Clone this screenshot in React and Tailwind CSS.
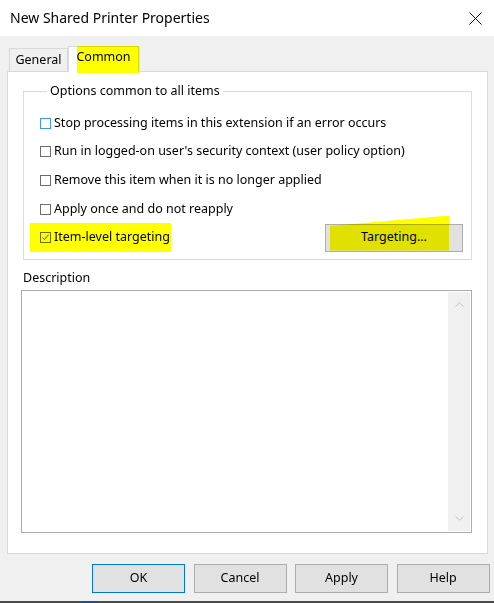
import { useState } from 'react';

const options = [
  { label: 'Stop processing items in this extension if an error occurs', checked: false, focus: true },
  { label: "Run in logged-on user's security context (user policy option)", checked: false },
  { label: 'Remove this item when it is no longer applied', checked: false },
  { label: 'Apply once and do not reapply', checked: false },
];

function Check({ checked, focus }) {
  return (
    <span
      className={`w-[11px] h-[11px] border bg-white flex items-center justify-center shrink-0 ${
        focus ? 'border-[#3c9be8]' : 'border-[#6d6d6d]'
      }`}
    >
      {checked && (
        <svg width="9" height="9" viewBox="0 0 9 9">
          <path d="M1.5 4.5 L3.5 6.5 L7.5 1.8" fill="none" stroke="#555" strokeWidth="1" />
        </svg>
      )}
    </span>
  );
}

function Button({ children, primary }) {
  return (
    <button
      className={`w-[93px] h-[29px] bg-[#e1e1e1] border text-[12.5px] text-black ${
        primary ? 'border-[#0078d7]' : 'border-[#adadad]'
      }`}
    >
      {children}
    </button>
  );
}

export default function App() {
  const [itemLevel] = useState(true);

  return (
    <div className="w-[494px] h-[603px] bg-[#f0f0f0] flex flex-col font-['Noto_Sans',sans-serif] text-[12.5px] text-black overflow-hidden">
      {/* title bar */}
      <div className="h-[36px] bg-white flex items-center justify-between pl-[10px] pr-[12px] shrink-0">
        <span className="text-[14px] leading-none">New Shared Printer Properties</span>
        <svg width="13" height="13" viewBox="0 0 13 13">
          <path d="M0.5 0.5 L12.5 12.5 M12.5 0.5 L0.5 12.5" stroke="#111" strokeWidth="1" />
        </svg>
      </div>

      {/* tabs */}
      <div className="flex items-end pl-[9px] pt-[8px] h-[35px] shrink-0">
        <div className="w-[59px] h-[23px] border border-b-0 border-[#d9d9d9] flex items-center justify-center">
          General
        </div>
        <div className="relative w-[71px] h-[26px] border border-b-0 border-[#d9d9d9] bg-white flex items-center justify-center -mb-px z-10">
          <span className="pb-[4px]">Common</span>
          <span className="absolute left-[8px] top-[-1px] w-[63px] h-[27px] bg-[#ffff00] mix-blend-multiply"></span>
        </div>
      </div>

      {/* tab panel */}
      <div className="ml-[7px] mr-[6px] h-[483px] bg-white border border-[#d9d9d9] px-[15px] pt-[10px] flex flex-col shrink-0">
        <fieldset className="border border-[#dcdcdc] h-[178px] pl-[16px] pr-[8px] pt-[8px] flex flex-col">
          <legend className="ml-[7px] px-[3px]">Options common to all items</legend>
          {options.map((o) => (
            <label key={o.label} className="flex items-center gap-[3px] h-[28.7px]">
              <Check checked={o.checked} focus={o.focus} />
              <span>{o.label}</span>
            </label>
          ))}
          <div className="flex items-center justify-between h-[28px]">
            <label className="relative flex items-center gap-[3px]">
              <Check checked={itemLevel} />
              <span>Item-level targeting</span>
              <span className="absolute left-[-10px] top-[-5px] w-[141px] h-[29px] bg-[#ffff00] mix-blend-multiply"></span>
            </label>
            <button className="relative w-[138px] h-[28px] bg-[#e1e1e1] border border-[#adadad] text-[12.5px]">
              Targeting...
              <span className="absolute left-[4px] top-[-9px] w-[119px] h-[35px] bg-[#ffff00] mix-blend-multiply [clip-path:polygon(0_30%,100%_0,100%_100%,0_100%)]"></span>
            </button>
          </div>
        </fieldset>

        <div className="mt-[6px] h-[24px] flex items-center">Description</div>
        <div className="-ml-[2px] w-[451px] h-[243px] border border-[#acacac] flex justify-end">
          <div className="w-[22px] bg-[#f0f0f0] flex flex-col items-center justify-between py-[10px] my-px mr-px">
            <svg width="9" height="5" viewBox="0 0 9 5">
              <path d="M0.5 4.5 L4.5 0.8 L8.5 4.5" fill="none" stroke="#c4c4c4" strokeWidth="1" />
            </svg>
            <svg width="9" height="5" viewBox="0 0 9 5">
              <path d="M0.5 0.5 L4.5 4.2 L8.5 0.5" fill="none" stroke="#c4c4c4" strokeWidth="1" />
            </svg>
          </div>
        </div>
      </div>

      {/* buttons */}
      <div className="flex justify-end gap-[8.5px] pr-[4.5px] mt-[10px] shrink-0">
        <Button primary>OK</Button>
        <Button>Cancel</Button>
        <Button>Apply</Button>
        <Button>Help</Button>
      </div>

      <div className="mt-auto h-[2px] bg-[#4a4a4a] flex shrink-0">
        <span className="ml-[82px] w-[16px] bg-[#1e4c8c]"></span>
      </div>
    </div>
  );
}
